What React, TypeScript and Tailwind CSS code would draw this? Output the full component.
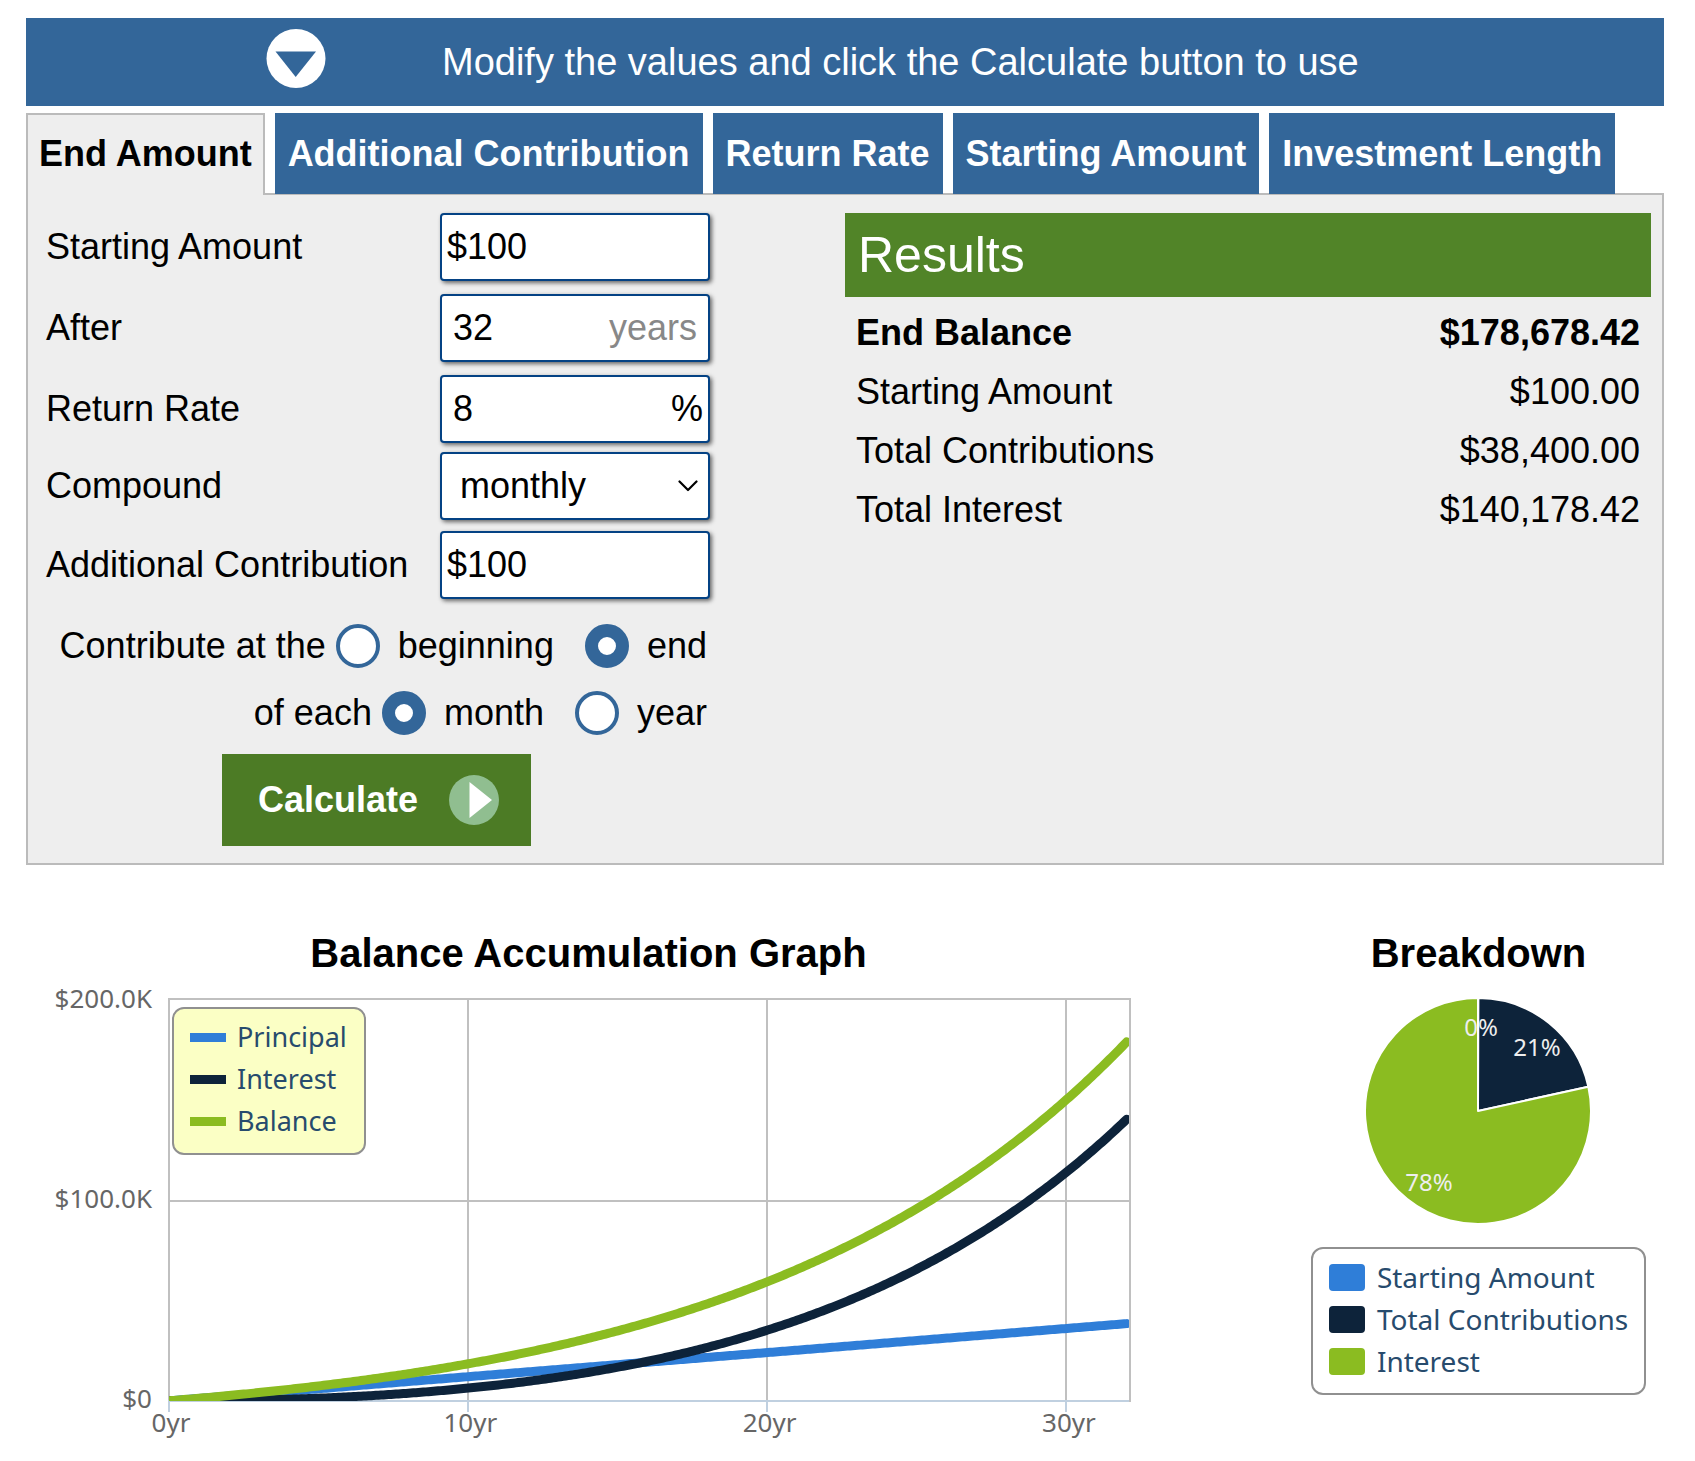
import React, { useState } from 'react';

interface FieldProps {
  id: string;
  label: string;
  rowClassName: string;
  children: React.ReactNode;
}

interface RadioProps {
  name: string;
  label: string;
  value: string;
  selected: string;
  onSelect: (value: string) => void;
}

const TABS = ['End Amount', 'Additional Contribution', 'Return Rate', 'Starting Amount', 'Investment Length'];

const RESULTS = [
  { label: 'End Balance', value: '$178,678.42' },
  { label: 'Starting Amount', value: '$100.00' },
  { label: 'Total Contributions', value: '$38,400.00' },
  { label: 'Total Interest', value: '$140,178.42' },
];

const BLUE = '#2f7ed8';
const NAVY = '#0d233a';
const GREEN = '#8bbc21';

const MONTHS = 32 * 12;
const START = 100;
const MONTHLY = 100;
const RATE = 0.08 / 12;

// Balances at the end of every month
const SERIES = Array.from({ length: MONTHS + 1 }, (_, month) => {
  const growth = Math.pow(1 + RATE, month);
  const balance = START * growth + MONTHLY * ((growth - 1) / RATE);
  const principal = START + MONTHLY * month;
  return { year: month / 12, balance, principal, interest: balance - principal };
});

const PLOT = { left: 143, right: 1104, top: 22, bottom: 424 };

const toX = (year: number) => PLOT.left + (year * 2993) / 100;
const toY = (amount: number) => PLOT.bottom - (amount / 200000) * (PLOT.bottom - PLOT.top);

const linePath = (key: 'balance' | 'principal' | 'interest') =>
  SERIES.map((p, i) => `${i === 0 ? 'M' : 'L'}${toX(p.year).toFixed(2)} ${toY(p[key]).toFixed(2)}`).join(' ');

const INPUT_CLASS = 'w-full h-full rounded border-2 border-[#044284] bg-white shadow-[2px_2px_4px_#666] outline-none';

const Field: React.FC<FieldProps> = ({ id, label, rowClassName, children }) => (
  <div className={`flex items-start ${rowClassName}`}>
    <label htmlFor={id} className="w-[394px] leading-[68px]">{label}</label>
    <div className="relative w-[270px] h-[68px]">{children}</div>
  </div>
);

const Radio: React.FC<RadioProps> = ({ name, label, value, selected, onSelect }) => (
  <label className="flex items-center gap-[18px]">
    <input
      type="radio"
      name={name}
      value={value}
      checked={selected === value}
      onChange={() => onSelect(value)}
      className="appearance-none size-11 rounded-full bg-white border-4 border-[#336699] checked:border-[13px]"
    />
    {label}
  </label>
);

const CalculatorForm: React.FC = () => {
  const [timing, setTiming] = useState('end');
  const [period, setPeriod] = useState('month');

  return (
    <form className="w-[664px] flex-shrink-0" onSubmit={e => e.preventDefault()}>
      <Field id="starting" label="Starting Amount" rowClassName="h-[81px]">
        <input id="starting" type="text" defaultValue="$100" className={`${INPUT_CLASS} px-[5px]`} />
      </Field>
      <Field id="years" label="After" rowClassName="h-[81px]">
        <input id="years" type="text" defaultValue="32" className={`${INPUT_CLASS} px-[11px]`} />
        <span className="absolute right-[13px] top-0 leading-[68px] text-[#888] pointer-events-none">years</span>
      </Field>
      <Field id="rate" label="Return Rate" rowClassName="h-[77px]">
        <input id="rate" type="text" defaultValue="8" className={`${INPUT_CLASS} px-[11px]`} />
        <span className="absolute right-[7px] top-0 leading-[68px] pointer-events-none">%</span>
      </Field>
      <Field id="compound" label="Compound" rowClassName="h-[79px]">
        <select id="compound" defaultValue="monthly" className={`${INPUT_CLASS} appearance-none px-[18px]`}>
          <option value="annually">annually</option>
          <option value="monthly">monthly</option>
          <option value="daily">daily</option>
        </select>
        <svg className="absolute right-3 top-7 w-[20px] h-[12px] pointer-events-none" viewBox="0 0 20 12" fill="none" stroke="#000" strokeWidth="2.2" strokeLinecap="round" strokeLinejoin="round">
          <path d="M1.500 1.500 L10 10 L18.500 1.500" />
        </svg>
      </Field>
      <Field id="contribution" label="Additional Contribution" rowClassName="h-[81px]">
        <input id="contribution" type="text" defaultValue="$100" className={`${INPUT_CLASS} px-[5px]`} />
      </Field>

      <div className="pr-[3px]">
        <div className="flex justify-end items-center h-[67px]" role="radiogroup" aria-label="Contribute at the">
          <span className="mr-[10px]">Contribute at the</span>
          <div className="flex gap-[31px]">
            <Radio name="timing" label="beginning" value="beginning" selected={timing} onSelect={setTiming} />
            <Radio name="timing" label="end" value="end" selected={timing} onSelect={setTiming} />
          </div>
        </div>
        <div className="flex justify-end items-center h-[67px]" role="radiogroup" aria-label="of each">
          <span className="mr-[10px]">of each</span>
          <div className="flex gap-[31px]">
            <Radio name="period" label="month" value="month" selected={period} onSelect={setPeriod} />
            <Radio name="period" label="year" value="year" selected={period} onSelect={setPeriod} />
          </div>
        </div>

        <button type="submit" className="flex items-center justify-between w-[309px] h-[92px] mt-2 mx-auto pl-9 pr-8 bg-[#4c7b25] text-white font-bold">
          Calculate
          <svg className="size-[50px]" viewBox="0 0 50 50">
            <circle cx="25" cy="25" r="25" fill="#90be90" />
            <path d="M20.500 7 L43 25 L20.500 43 Z" fill="#fff" />
          </svg>
        </button>
      </div>
    </form>
  );
};

const ResultsPanel: React.FC = () => (
  <section className="flex-grow min-w-0">
    <h2 className="h-[84px] px-[13px] bg-[#518428] text-white text-[50px] leading-[84px]">Results</h2>
    <table className="w-full mt-[6px]">
      <tbody>
        {RESULTS.map((row, i) => {
          const weight = i === 0 ? 'font-bold' : 'font-normal';
          return (
            <tr key={row.label} className="h-[59px]">
              <th scope="row" className={`px-[11px] text-left ${weight}`}>{row.label}</th>
              <td className={`px-[11px] text-right ${weight}`}>{row.value}</td>
            </tr>
          );
        })}
      </tbody>
    </table>
  </section>
);

const BalanceChart: React.FC = () => (
  <svg viewBox="0 0 1125 470" className="w-full font-['Noto_Sans',sans-serif]" role="img" aria-label="Balance Accumulation Graph">
    <defs>
      <clipPath id="plot-area">
        <rect x={PLOT.left} y={PLOT.top} width={PLOT.right - PLOT.left - 1} height={PLOT.bottom - PLOT.top} />
      </clipPath>
    </defs>

    <g stroke="#c0c0c0" strokeWidth="2" fill="none">
      <rect x={PLOT.left} y={PLOT.top} width={PLOT.right - PLOT.left} height={PLOT.bottom - PLOT.top} />
      <path d={`M${PLOT.left} ${toY(99500)} H${PLOT.right}`} />
      {[10, 20, 30].map(year => (
        <path key={year} d={`M${Math.floor(toX(year))} ${PLOT.top} V${PLOT.bottom}`} />
      ))}
    </g>
    <g stroke="#c0d0e0" strokeWidth="2">
      <path d={`M${PLOT.left - 1} ${PLOT.bottom} H${PLOT.right - 1}`} />
      {[0, 10, 20, 30].map(year => (
        <path key={year} d={`M${Math.floor(toX(year))} ${PLOT.bottom} V${PLOT.bottom + 11}`} />
      ))}
    </g>

    <g clipPath="url(#plot-area)" fill="none" strokeWidth="9" strokeLinecap="round" strokeLinejoin="round">
      <path d={linePath('principal')} stroke={BLUE} />
      <path d={linePath('interest')} stroke={NAVY} />
      <path d={linePath('balance')} stroke={GREEN} />
    </g>

    <g fill="#666" fontSize="26">
      <text x="126" y="31" textAnchor="end">$200.0K</text>
      <text x="126" y="231" textAnchor="end">$100.0K</text>
      <text x="126" y="431" textAnchor="end">$0</text>
      {[0, 10, 20, 30].map(year => (
        <text key={year} x={toX(year) + 2} y="455" textAnchor="middle">{year}yr</text>
      ))}
    </g>

    <rect x="147" y="31" width="192" height="146" rx="11" fill="#fbffc5" stroke="#909090" strokeWidth="2" />
    {[
      { label: 'Principal', color: BLUE },
      { label: 'Interest', color: NAVY },
      { label: 'Balance', color: GREEN },
    ].map((item, i) => (
      <g key={item.label}>
        <rect x="164" y={56 + i * 42} width="36" height="9" fill={item.color} />
        <text x="211" y={70 + i * 42} fontSize="27" fill="#274b6d">{item.label}</text>
      </g>
    ))}
  </svg>
);

const PIE = { cx: 185, cy: 134, r: 113 };

const slicePath = (from: number, to: number) => {
  const point = (share: number) => {
    const angle = share * 2 * Math.PI;
    return `${(PIE.cx + PIE.r * Math.sin(angle)).toFixed(2)} ${(PIE.cy - PIE.r * Math.cos(angle)).toFixed(2)}`;
  };
  return `M${PIE.cx} ${PIE.cy} L${point(from)} A${PIE.r} ${PIE.r} 0 ${to - from > 0.5 ? 1 : 0} 1 ${point(to)} Z`;
};

const BreakdownChart: React.FC = () => {
  const total = SERIES[MONTHS].balance;
  const startShare = START / total;
  const contributed = SERIES[MONTHS].principal / total;

  return (
    <svg viewBox="0 0 371 270" className="w-full font-['Noto_Sans',sans-serif]" role="img" aria-label="Breakdown">
      <g stroke="#fff" strokeWidth="2" strokeLinejoin="round">
        <path d={slicePath(0, startShare)} fill={BLUE} />
        <path d={slicePath(startShare, contributed)} fill={NAVY} />
        <path d={slicePath(contributed, 1)} fill={GREEN} />
      </g>
      <g fill="#eee" fontSize="24" textAnchor="middle">
        <text x="188" y="59">0%</text>
        <text x="244" y="79">21%</text>
        <text x="136" y="214">78%</text>
      </g>
    </svg>
  );
};

const App: React.FC = () => {
  const [activeTab, setActiveTab] = useState(TABS[0]);

  return (
    <main className="bg-white text-black pt-[18px] pl-[26px] pr-[31px] font-['Liberation_Sans',Arial,sans-serif] text-[36px] leading-[44px]">
      <div className="flex items-center gap-[116px] h-[88px] pl-60 bg-[#336699] text-white">
        <svg className="size-[60px] mb-2 flex-shrink-0" viewBox="0 0 60 60">
          <circle cx="30" cy="30.500" r="29.500" fill="#fff" />
          <path d="M9.500 23.500 H50 L29.700 49 Z" fill="#336699" />
        </svg>
        <p className="text-[38px]">Modify the values and click the Calculate button to use</p>
      </div>

      <nav className="relative z-10 flex items-start gap-[10px] mt-[7px] -mb-[2px] font-bold whitespace-nowrap">
        {TABS.map(tab => (
          <a
            key={tab}
            href="#"
            onClick={e => { e.preventDefault(); setActiveTab(tab); }}
            className={tab === activeTab
              ? 'h-[82px] px-[11px] pt-[17px] border-2 border-b-0 border-[#bbb] bg-[#eee] text-black'
              : 'h-[81px] px-[13px] pt-[19px] bg-[#336699] text-white'}
          >
            {tab}
          </a>
        ))}
      </nav>

      <div className="flex gap-[135px] pt-[18px] pb-[17px] pl-[18px] pr-[11px] border-2 border-[#bbb] bg-[#eee]">
        <CalculatorForm />
        <ResultsPanel />
      </div>

      <div className="grid grid-cols-[1125fr_371fr] gap-[142px] mt-16">
        <section>
          <h2 className="text-[40px] leading-[48px] font-bold text-center">Balance Accumulation Graph</h2>
          <BalanceChart />
        </section>
        <section>
          <h2 className="text-[40px] leading-[48px] font-bold text-center">Breakdown</h2>
          <BreakdownChart />
          <ul className="w-fit mx-auto pt-[7px] pb-[11px] px-4 border-2 border-[#909090] rounded-xl font-['Noto_Sans',sans-serif] text-[28px] leading-[42px] text-[#274b6d] whitespace-nowrap">
            <li className="flex items-center gap-3"><span className="w-9 h-[27px] rounded bg-[#2f7ed8]" />Starting Amount</li>
            <li className="flex items-center gap-3"><span className="w-9 h-[27px] rounded bg-[#0d233a]" />Total Contributions</li>
            <li className="flex items-center gap-3"><span className="w-9 h-[27px] rounded bg-[#8bbc21]" />Interest</li>
          </ul>
        </section>
      </div>
    </main>
  );
};

export default App;
